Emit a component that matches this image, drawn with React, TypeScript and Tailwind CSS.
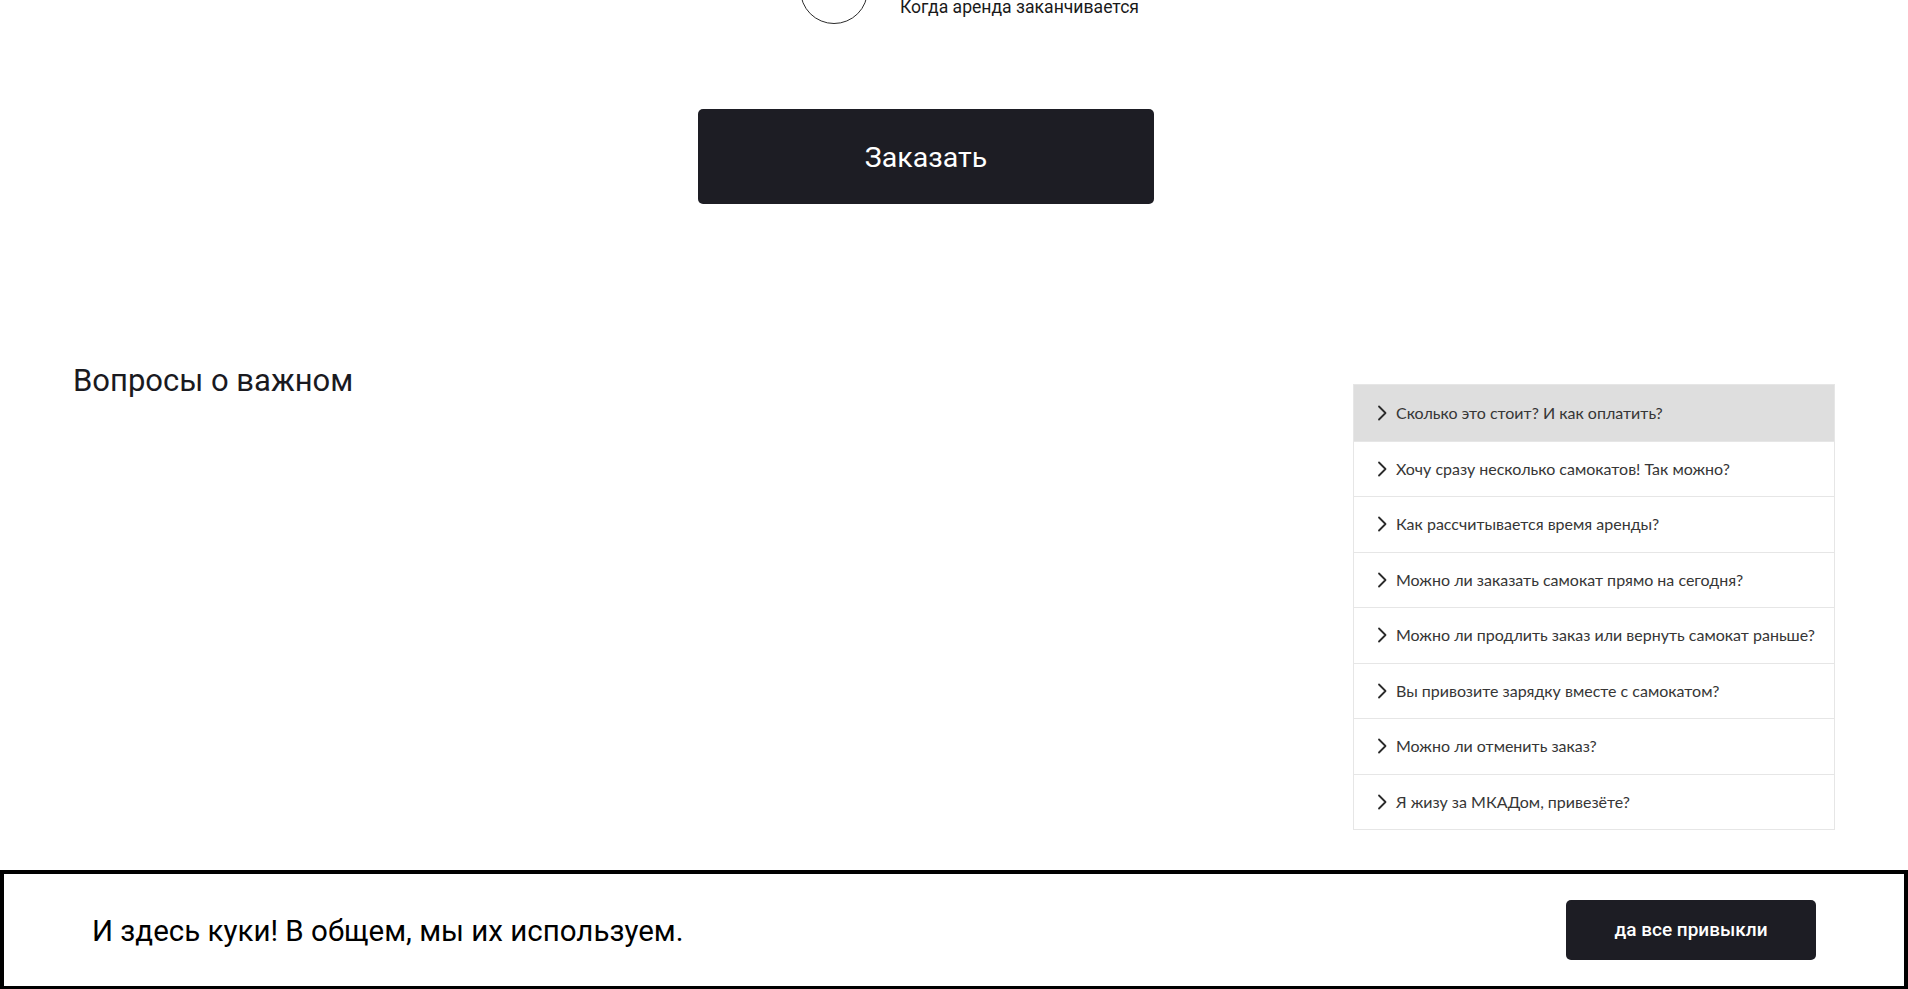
import React from "react";

const faq = [
  "Сколько это стоит? И как оплатить?",
  "Хочу сразу несколько самокатов! Так можно?",
  "Как рассчитывается время аренды?",
  "Можно ли заказать самокат прямо на сегодня?",
  "Можно ли продлить заказ или вернуть самокат раньше?",
  "Вы привозите зарядку вместе с самокатом?",
  "Можно ли отменить заказ?",
  "Я жизу за МКАДом, привезёте?",
];

function Chevron() {
  return (
    <svg width="11" height="16" viewBox="0 0 11 16" fill="none" className="shrink-0">
      <polyline
        points="2,1.5 8.5,8 2,14.5"
        stroke="#2b2b2b"
        strokeWidth="1.8"
        strokeLinecap="round"
        strokeLinejoin="round"
      />
    </svg>
  );
}

export default function App() {
  return (
    <div className="h-[989px] overflow-hidden bg-white font-['Roboto',sans-serif] text-black">
      {/* end of the "how it works" steps */}
      <div className="ml-[800px] -mt-[44px] flex items-start gap-[32px]">
        <div className="h-[68px] w-[68px] shrink-0 rounded-full border border-[#2b2b2b]" />
        <p className="mt-[41px] text-[17.6px] leading-[20px] text-[#1a1a1a]">Когда аренда заканчивается</p>
      </div>

      <button className="ml-[698px] mt-[85px] flex h-[95px] w-[456px] items-center justify-center rounded-[5px] bg-[#1d1d24] pt-[4px] text-[28.5px] text-white">
        Заказать
      </button>

      {/* FAQ */}
      <section className="mt-[157px] flex items-start justify-between px-[73px]">
        <h2 className="mt-[3px] text-[31px] leading-[34px] text-[#1a1a1f]">Вопросы о важном</h2>
        <ul className="mt-[23px] w-[482px] border border-[#e6e6e6] font-['Lato',sans-serif]">
          {faq.map((q, i) => (
            <li
              key={q}
              className={`flex h-[55.5px] items-center gap-[8px] pl-[23px] text-[16px] text-[#363636] ${
                i === 0 ? "bg-[#dedede]" : "border-t border-[#e6e6e6]"
              }`}
            >
              <Chevron />
              <span>{q}</span>
            </li>
          ))}
        </ul>
      </section>

      {/* cookie banner */}
      <div className="mt-[40px] flex h-[120px] items-center justify-between border-[4px] border-black px-[88px]">
        <p className="pt-[3px] text-[29.5px] text-black">И здесь куки! В общем, мы их используем.</p>
        <button className="flex h-[60px] w-[250px] items-center justify-center rounded-[5px] bg-[#1d1d24] text-[19px] font-medium text-white">
          да все привыкли
        </button>
      </div>
    </div>
  );
}
